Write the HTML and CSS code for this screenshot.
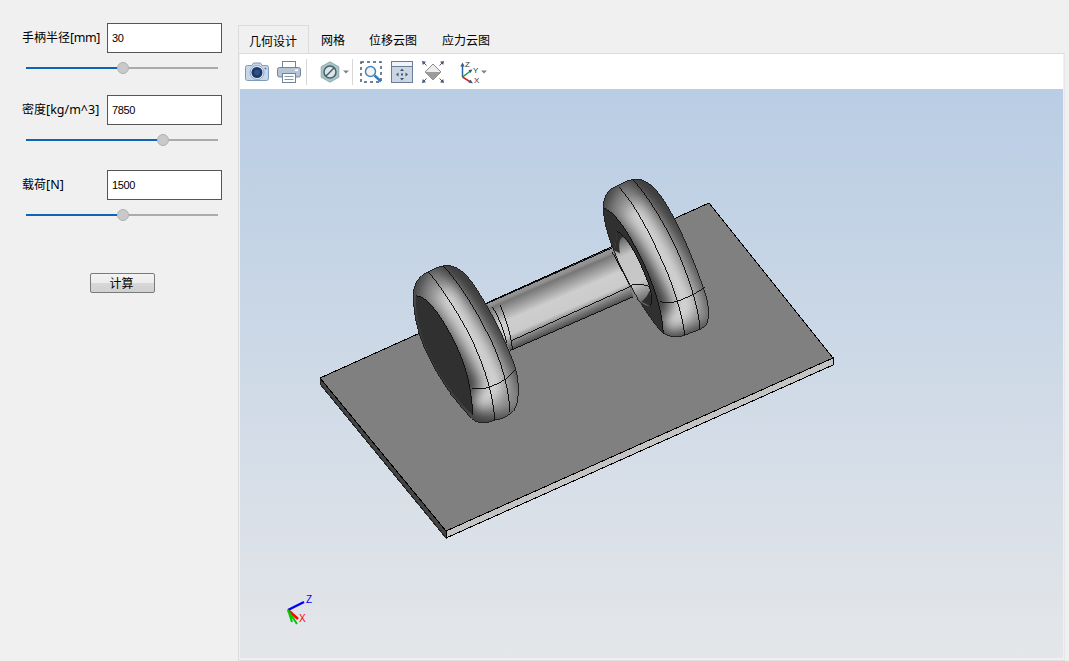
FILE: index.html
```html
<!DOCTYPE html>
<html lang="zh">
<head>
<meta charset="utf-8">
<title>设计</title>
<link rel="stylesheet" href="styles.css">
</head>
<body>
<div class="app">
  <aside class="side">
    <div class="field f1"><label class="lab">手柄半径<span class="u tight">[mm]</span></label><div class="inp">30</div></div>
    <div class="slider"><div class="fill w1"></div><div class="knob"></div><div class="rest"></div></div>
    <div class="field f2"><label class="lab">密度<span class="u">[kg/m^3]</span></label><div class="inp">7850</div></div>
    <div class="slider"><div class="fill w2"></div><div class="knob"></div><div class="rest"></div></div>
    <div class="field f3"><label class="lab">载荷<span class="u">[N]</span></label><div class="inp">1500</div></div>
    <div class="slider"><div class="fill w1"></div><div class="knob"></div><div class="rest"></div></div>
    <button class="btn">计算</button>
  </aside>
  <main class="main">
    <nav class="tabs">
      <div class="tab on">几何设计</div>
      <div class="tab">网格</div>
      <div class="tab">位移云图</div>
      <div class="tab t4">应力云图</div>
    </nav>
    <section class="pane">
      <div class="toolbar">
        <svg class="ic cam" width="24" height="20" viewBox="0 0 24 20"><path d="M2.500 3.500H7l1.500-2.500h7L17 3.500h4.500a2 2 0 0 1 2 2v11a2 2 0 0 1-2 2h-19a2 2 0 0 1-2-2v-11a2 2 0 0 1 2-2z" fill="#c6d7ea" stroke="#7c9abb"/><circle cx="12" cy="10.500" r="7" fill="#e4edf6" stroke="#8fa9c6"/><circle cx="12" cy="10.500" r="5.500" fill="#1c3666"/><circle cx="12" cy="10.500" r="3" fill="#2f4f86"/><circle cx="20.500" cy="6.500" r="1" fill="#5c7fa6"/></svg>
        <svg class="ic pri" width="24" height="22" viewBox="0 0 24 22"><rect x="5.500" y=".5" width="13" height="7" fill="#fff" stroke="#73859b"/><rect x=".5" y="6.500" width="23" height="9.500" rx="2" fill="#b6c5d6" stroke="#73859b"/><rect x="18" y="8.500" width="3" height="1.500" fill="#fff"/><rect x="5.500" y="12.500" width="13" height="9" fill="#fff" stroke="#73859b"/><path d="M7.500 15.500h9M7.500 18.500h9" stroke="#8496ab"/></svg>
        <div class="sep"></div>
        <svg class="ic hex" width="20" height="22" viewBox="0 0 20 22"><path d="M10 .8l8.800 5v10.400l-8.800 5-8.800-5V5.800z" fill="#a9c2c6" stroke="#8fadb3"/><circle cx="10" cy="11" r="6" fill="#dde6e7" stroke="#44626b" stroke-width="1.500"/><path d="M5.800 15.200l8.400-8.400" stroke="#44626b" stroke-width="1.500"/></svg>
        <svg class="drop d1" width="6" height="4" viewBox="0 0 6 4"><path d="M0 .5h6L3 3.500z" fill="#808080"/></svg>
        <div class="sep s2nd"></div>
        <svg class="ic das" width="22" height="22" viewBox="0 0 22 22"><rect x="1" y="1" width="20" height="20" fill="none" stroke="#44587a" stroke-width="1.500" stroke-dasharray="3 3"/><circle cx="10.500" cy="10.500" r="5" fill="#eef5fa" stroke="#4f83ad" stroke-width="1.500"/><path d="M14.500 14.500l6.500 6" stroke="#2f7fc0" stroke-width="2.500"/></svg>
        <svg class="ic win" width="22" height="22" viewBox="0 0 22 22"><rect x=".5" y=".5" width="21" height="21" fill="#ccd6e3" stroke="#687d9a"/><rect x="1" y="1" width="20" height="4" fill="#f0f3f7"/><path d="M1 5.500h20" stroke="#687d9a"/><path d="M11 7.500l2 2.500H9zM11 19.500L9 17h4zM5 13.500L7.500 11.500v4zM17 13.500L14.500 15.500v-4z" fill="#3f5675"/><rect x="10" y="12.500" width="2" height="2" fill="#3f5675"/></svg>
        <svg class="ic dia" width="22" height="22" viewBox="0 0 22 22"><path d="M11 3l8 8-8 8-8-8z" fill="#ececec" stroke="#8a8a8a"/><path d="M3 11h16l-8 8z" fill="#9c9c9c"/><path d="M0 0l4 .8L.8 4zM22 0l-.8 4L18 .8zM0 22l.8-4L4 21.200zM22 22l-4-.8 3.200-3.200z" fill="#44587a"/><path d="M1.500 1.500l3 3M20.500 1.500l-3 3M1.500 20.500l3-3M20.500 20.500l-3-3" stroke="#44587a"/></svg>
        <svg class="ic axs" width="23" height="24" viewBox="0 0 23 24"><path d="M4.500 17V5" stroke="#2b62b0" stroke-width="1.500"/><path d="M4.500 17l8-6" stroke="#1f9a3a" stroke-width="1.500"/><path d="M4.500 17l8 5" stroke="#d0282a" stroke-width="1.500"/><path d="M4.500 2.500l-2.200 4h4.400zM14.500 9.500l-4 .5 2 3zM15 23.500L12.500 19.500l-2 3z" fill="#3a5a80"/><text x="7" y="7" class="axis">Z</text><text x="15" y="13" class="axis">Y</text><text x="16" y="22.500" class="axis">X</text></svg>
        <svg class="drop d2" width="6" height="4" viewBox="0 0 6 4"><path d="M0 .5h6L3 3.500z" fill="#808080"/></svg>
      </div>
      <div class="view">
        <svg class="scene" width="823" height="569" viewBox="240 89 823 569">
          <defs>
            <linearGradient id="shaft" gradientUnits="userSpaceOnUse" x1="452" y1="315" x2="516" y2="462">
              <stop offset="0" stop-color="#989898"/>
              <stop offset=".07" stop-color="#909090"/>
              <stop offset=".12" stop-color="#777"/>
              <stop offset=".46" stop-color="#cecece"/>
              <stop offset=".72" stop-color="#cbcbcb"/>
              <stop offset=".84" stop-color="#8c8c8c"/>
              <stop offset="1" stop-color="#4a4a4a"/>
            </linearGradient>
            <linearGradient id="fil" gradientUnits="userSpaceOnUse" x1="632" y1="205" x2="720" y2="400">
              <stop offset="0" stop-color="#4c4c4c"/>
              <stop offset=".3" stop-color="#c4c4c4"/>
              <stop offset=".72" stop-color="#c8c8c8"/>
              <stop offset="1" stop-color="#666"/>
            </linearGradient>
            <filter id="soft" x="-40%" y="-40%" width="180%" height="180%"><feGaussianBlur stdDeviation="20"/></filter>
            <clipPath id="cl"><path d="M40 385C38 345 55 318 85 305C105 295 120 287 140 287C170 287 195 305 225 350C275 425 320 520 345 590C355 625 358 660 352 695C347 725 320 745 285 750C262 760 235 765 215 745C170 700 110 620 70 525C50 475 42 430 40 385z"/></clipPath>
            <clipPath id="cr"><path d="M610 110C610 80 625 58 650 48C675 35 690 28 712 28C740 28 770 55 800 105C845 180 890 290 920 385C928 420 928 445 918 465C905 480 880 485 855 495C825 507 800 500 780 480C745 440 695 360 660 285C635 230 610 165 610 110z"/></clipPath>
          </defs>
          <path class="plate-l" d="M320 378L446 531L446 538L320 384z"/>
          <path class="plate-r" d="M446 531L833 358L833 365L446 538z"/>
          <path class="plate-t" d="M320 378L709 203L833 358L446 531z"/>
          <g transform="translate(400 170) scale(.33333)">
            <path d="M262 400L640 232L700 380L330 542z" fill="url(#shaft)"/>
            <path class="ln" d="M262 400L640 232M330 542L700 380"/>
            <path class="ln" d="M335 512L690 350"/>
            <path class="ln" d="M300 405C315 440 330 480 338 540M278 412C295 440 312 480 320 520"/>

            <g clip-path="url(#cr)">
              <rect x="600" y="20" width="335" height="490" fill="#3c3c3c"/>
              <path d="M640 80C720 120 850 300 890 470" fill="none" stroke="#8a8a8a" stroke-width="110" filter="url(#soft)"/>
              <path d="M690 110C760 190 825 320 860 405C855 430 830 450 795 465" fill="none" stroke="#dcdcdc" stroke-width="55" filter="url(#soft)"/>
              <path class="disc" d="M612 115C640 125 670 165 700 220C745 300 785 400 790 492L770 470C745 440 700 370 660 285C635 230 610 170 612 115z"/>
              <path d="M650 190C680 195 720 270 745 340C755 370 760 395 750 408C735 410 710 385 690 380C675 330 660 285 640 240C650 225 648 205 650 190z" fill="url(#fil)"/>
              <path d="M640 240C650 225 648 205 650 190C653 185 662 188 670 200C658 205 655 220 660 250z" fill="#2e2e2e"/>
              <path d="M725 395C735 400 745 405 750 408C758 395 755 375 748 362C745 375 735 385 725 395z" fill="#2e2e2e"/>
            </g>
            <path class="ln" d="M612 115C640 125 670 165 700 220C745 300 785 400 790 492"/>
            <path class="ln" d="M652 185C680 195 720 270 745 340C755 370 760 395 750 408"/>
            <path class="ln" d="M636 245C655 280 672 315 692 350M690 347C710 340 730 342 748 350"/>
            <path class="ln" d="M655 50C700 95 750 190 785 270C810 320 845 420 855 496"/>
            <path class="ln" d="M700 30C745 80 800 170 835 250C860 310 895 400 900 476"/>
            <path class="ln" d="M780 395C800 400 820 398 838 392C865 380 895 368 915 350"/>
            <path class="edge" d="M610 110C610 80 625 58 650 48C675 35 690 28 712 28C740 28 770 55 800 105C845 180 890 290 920 385C928 420 928 445 918 465C905 480 880 485 855 495C825 507 800 500 780 480C745 440 695 360 660 285C635 230 610 165 610 110z"/>

            <g clip-path="url(#cl)">
              <rect x="30" y="280" width="335" height="490" fill="#3c3c3c"/>
              <path d="M70 340C150 370 290 590 330 730" fill="none" stroke="#8a8a8a" stroke-width="110" filter="url(#soft)"/>
              <path d="M125 360C190 450 260 570 285 640C280 670 260 690 225 705" fill="none" stroke="#dcdcdc" stroke-width="55" filter="url(#soft)"/>
              <path class="disc" d="M47 378C75 375 115 425 150 490C185 555 215 630 218 735C190 710 130 640 90 560C65 510 45 430 47 378z"/>
            </g>
            <path class="ln" d="M47 378C75 375 115 425 150 490C185 555 215 630 218 735"/>
            <path class="ln" d="M85 306C120 345 190 450 225 530C250 590 275 650 285 750"/>
            <path class="ln" d="M130 288C175 335 235 430 275 515C300 570 325 640 330 725"/>
            <path class="ln" d="M215 655C240 660 260 655 275 648C300 640 325 625 345 600"/>
            <path class="edge" d="M40 385C38 345 55 318 85 305C105 295 120 287 140 287C170 287 195 305 225 350C275 425 320 520 345 590C355 625 358 660 352 695C347 725 320 745 285 750C262 760 235 765 215 745C170 700 110 620 70 525C50 475 42 430 40 385z"/>
          </g>
          <path d="M288 610L304 602" stroke="#0000ff" stroke-width="2.500"/>
          <path d="M288 610L298 619" stroke="#ff0000" stroke-width="2.500"/>
          <path d="M288 610L292 622M289 612L297 624" stroke="#00cc00" stroke-width="2"/>
          <text x="306" y="603" class="tz">Z</text>
          <text x="299" y="622" class="tx">X</text>
        </svg>
      </div>
    </section>
  </main>
</div>
</body>
</html>
```
FILE: styles.css
```css
* { box-sizing: border-box; }
html, body { margin: 0; padding: 0; height: 100%; overflow: hidden; }
body { background: #f0f0f0; font-family: "Noto Sans CJK SC", "Noto Sans", sans-serif; font-size: 12px; color: #000; }
.app { display: flex; width: 1069px; height: 661px; }
.side { width: 238px; flex: none; padding: 23px 16px 0 22px; display: flex; flex-direction: column; }
.field { display: flex; align-items: center; height: 30px; }
.f2 { margin-top: 22px; }
.f3 { margin-top: 25px; }
.lab { width: 85px; flex: none; white-space: nowrap; font-size: 12px; line-height: 30px; margin-top: -1px; }
.u { font-family: "Noto Sans", sans-serif; font-size: 12.500px; }
.tight { letter-spacing: -.4px; }
.inp { width: 115px; height: 30px; flex: none; background: #fff; border: 1px solid #555; padding-left: 4px; font: 11px/28px "Liberation Sans", sans-serif; letter-spacing: -.4px; }
.slider { display: flex; align-items: center; height: 11px; margin: 9px 4px 0 4px; }
.fill { height: 2px; background: #0f63b4; }
.w1 { width: 91px; }
.w2 { width: 131px; }
.knob { width: 12px; height: 12px; flex: none; border-radius: 50%; background: #c9c9c9; border: 1px solid #b0b0b0; }
.rest { flex: 1; height: 2px; background: #ababab; }
.btn { align-self: flex-start; margin: 53px 0 0 68px; width: 65px; height: 20px; padding: 0 2px 0 0; border: 1px solid #7a7a7a; border-radius: 2px; background: linear-gradient(#f3f3f3 0, #ececec 50%, #d8d8d8 50%, #d0d0d0 100%); font: 12px "Noto Sans CJK SC", sans-serif; color: #000; line-height: 16px; }
.main { flex: 1; min-width: 0; display: flex; flex-direction: column; padding: 25px 4px 0 0; }
.tabs { display: flex; height: 28px; flex: none; }
.tab { padding: 0 12px; line-height: 30px; font-size: 12px; height: 28px; white-space: nowrap; }
.tab.on { width: 71px; padding: 0 10px; background: #f0f0f0; border: 1px solid #dcdcdc; border-bottom: 0; line-height: 29px; }
.t4 { margin-left: 1px; }
.pane { flex: 1; min-height: 0; border: 1px solid #dcdcdc; border-right-color: #e6e6e6; border-bottom-color: #e0e0e0; padding: 0 1px 2px 1px; display: flex; flex-direction: column; }
.toolbar { height: 35px; flex: none; background: #fff; display: flex; align-items: center; }
.ic { flex: none; }
.sep { width: 1px; height: 26px; background: #d8d8d8; flex: none; }
.cam { margin-left: 5px; }
.pri { margin-left: 8px; }
.toolbar .sep { margin-left: 5px; }
.hex { margin-left: 13px; }
.drop { flex: none; }
.d1 { margin-left: 3px; }
.toolbar .s2nd { margin-left: 3px; }
.das { margin-left: 7px; }
.win { margin-left: 9px; }
.dia { margin-left: 9px; }
.axs { margin-left: 14px; }
.view { flex: 1; min-height: 0; background: linear-gradient(#b9cde4, #e4e6e9); }
.scene { display: block; }
.plate-t { fill: #808080; stroke: #000; stroke-width: 1; shape-rendering: crispEdges; }
.plate-l { fill: #444; stroke: #222; stroke-width: 1; shape-rendering: crispEdges; }
.plate-r { fill: #c4c4c4; stroke: #000; stroke-width: 1; shape-rendering: crispEdges; }
.ln { fill: none; stroke: #111; stroke-width: 3; shape-rendering: crispEdges; }
.edge { fill: none; stroke: #222; stroke-width: 3; shape-rendering: crispEdges; }
.disc { fill: #303030; }
.axis { font: 8px "Liberation Sans", sans-serif; fill: #333; }
.tz { font: 10px "Liberation Sans", sans-serif; fill: #0000ff; }
.tx { font: 10px "Liberation Sans", sans-serif; fill: #ff0000; }
```
